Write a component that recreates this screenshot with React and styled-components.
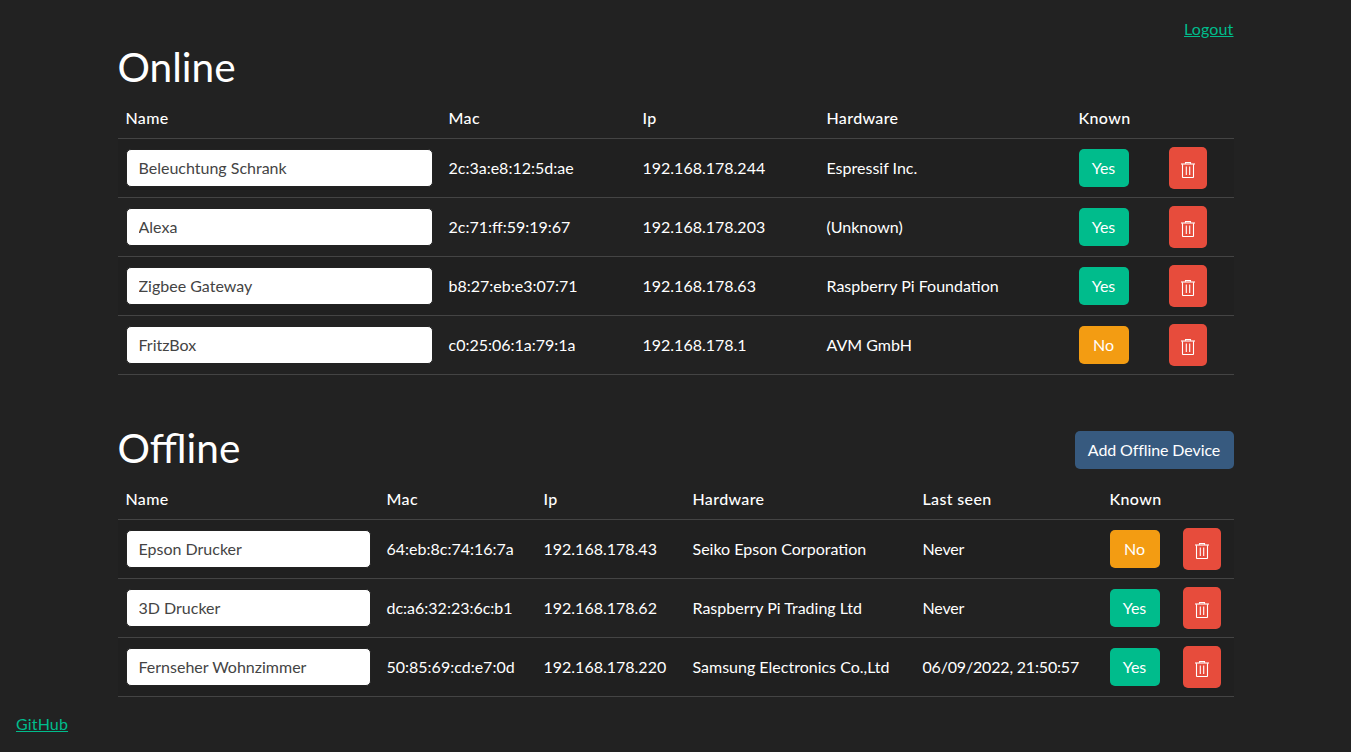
import React from 'react';
import styled, { createGlobalStyle } from 'styled-components';

const GlobalStyle = createGlobalStyle`
  * {
    box-sizing: border-box;
  }

  body {
    margin: 0;
    background: #222;
    color: #fff;
    font-family: Lato, "Liberation Sans", sans-serif;
    font-size: 16px;
    line-height: 24px;
  }
`;

const Page = styled.div`
  display: flex;
  flex-direction: column;
  min-height: 100vh;
  padding: 17px 16px 16px;
`;

const Main = styled.main`
  width: 1116px;
  margin: 0 auto;
`;

const TopBar = styled.div`
  display: flex;
  justify-content: flex-end;
`;

const Link = styled.a`
  color: #00bc8c;
  text-decoration: underline;
  letter-spacing: 0.15px;
`;

const SectionHead = styled.div`
  display: flex;
  align-items: center;
  justify-content: space-between;
  margin-top: ${(p) => p.$top}px;
  margin-bottom: ${(p) => p.$bottom}px;
`;

const Title = styled.h1`
  margin: 0;
  font-size: 40.6px;
  font-weight: 400;
  line-height: 48px;
`;

const Table = styled.table`
  width: 100%;
  table-layout: fixed;
  border-collapse: collapse;
`;

const Col = styled.col`
  width: ${(p) => p.$w}px;
`;

const Th = styled.th`
  height: 40px;
  padding: 8px;
  border-bottom: 1px solid #444;
  font-weight: 500;
  text-align: left;
  white-space: nowrap;
  letter-spacing: 0.35px;
`;

const Row = styled.tr`
  background: ${(p) => (p.$striped ? 'rgba(0, 0, 0, 0.05)' : 'transparent')};
`;

const Td = styled.td`
  height: 59px;
  padding: 8px;
  border-bottom: 1px solid #444;
  vertical-align: middle;
  white-space: nowrap;
`;

const SeenCell = styled(Td)`
  letter-spacing: -0.18px;
`;

const NameInput = styled.input`
  display: block;
  width: 100%;
  height: 38px;
  padding: 5px 12px 7px;
  border: 1px solid #222;
  border-radius: 5px;
  background: #fff;
  color: #444;
  font: inherit;
`;

const Button = styled.button`
  display: inline-flex;
  align-items: center;
  justify-content: center;
  height: 38px;
  padding: 6px 12px;
  border: 0;
  border-radius: 5px;
  color: #fff;
  font: inherit;
  cursor: pointer;
`;

const KnownButton = styled(Button)`
  width: 50px;
  background: ${(p) => (p.$known ? '#00bc8c' : '#f39c12')};
`;

const DeleteButton = styled(Button)`
  width: 38px;
  height: 42px;
  padding: 3px 0 0;
  background: #e74c3c;
`;

const AddButton = styled(Button)`
  width: 159px;
  margin-top: 4px;
  padding: 6px 0;
  background: #375a7f;
  letter-spacing: -0.1px;
`;

const TrashIcon = () => (
  <svg width="14" height="16" viewBox="0 0 14 16" fill="none" stroke="currentColor" strokeWidth="1.1">
    <path d="M0 2h14" />
    <path d="M4.5 1.8V0.5h5v1.3" />
    <path d="M1.5 2.2v12.6a0.7 0.7 0 0 0 0.7 0.7h9.6a0.7 0.7 0 0 0 0.7-0.7V2.2" />
    <path d="M5.3 4.6v8.4M8.7 4.6v8.4" />
  </svg>
);

const Footer = styled.footer`
  margin-top: auto;
`;

const online = [
  { name: 'Beleuchtung Schrank', mac: '2c:3a:e8:12:5d:ae', ip: '192.168.178.244', hw: 'Espressif Inc.', known: true },
  { name: 'Alexa', mac: '2c:71:ff:59:19:67', ip: '192.168.178.203', hw: '(Unknown)', known: true },
  { name: 'Zigbee Gateway', mac: 'b8:27:eb:e3:07:71', ip: '192.168.178.63', hw: 'Raspberry Pi Foundation', known: true },
  { name: 'FritzBox', mac: 'c0:25:06:1a:79:1a', ip: '192.168.178.1', hw: 'AVM GmbH', known: false },
];

const offline = [
  { name: 'Epson Drucker', mac: '64:eb:8c:74:16:7a', ip: '192.168.178.43', hw: 'Seiko Epson Corporation', seen: 'Never', known: false },
  { name: '3D Drucker', mac: 'dc:a6:32:23:6c:b1', ip: '192.168.178.62', hw: 'Raspberry Pi Trading Ltd', seen: 'Never', known: true },
  { name: 'Fernseher Wohnzimmer', mac: '50:85:69:cd:e7:0d', ip: '192.168.178.220', hw: 'Samsung Electronics Co.,Ltd', seen: '06/09/2022, 21:50:57', known: true },
];

const onlineCols = [323, 194, 184, 252, 90, 73];
const offlineCols = [261, 157, 149, 230, 187, 73, 59];

const DeviceTable = ({ devices, cols, showSeen }) => (
  <Table>
    <colgroup>
      {cols.map((w, i) => (
        <Col key={i} $w={w} />
      ))}
    </colgroup>
    <thead>
      <tr>
        <Th>Name</Th>
        <Th>Mac</Th>
        <Th>Ip</Th>
        <Th>Hardware</Th>
        {showSeen && <Th>Last seen</Th>}
        <Th>Known</Th>
        <Th />
      </tr>
    </thead>
    <tbody>
      {devices.map((d, i) => (
        <Row key={d.mac} $striped={i % 2 === 0}>
          <Td>
            <NameInput type="text" defaultValue={d.name} />
          </Td>
          <Td>{d.mac}</Td>
          <Td>{d.ip}</Td>
          <Td>{d.hw}</Td>
          {showSeen && <SeenCell>{d.seen}</SeenCell>}
          <Td>
            <KnownButton $known={d.known}>{d.known ? 'Yes' : 'No'}</KnownButton>
          </Td>
          <Td>
            <DeleteButton aria-label="Delete">
              <TrashIcon />
            </DeleteButton>
          </Td>
        </Row>
      ))}
    </tbody>
  </Table>
);

const App = () => {
  return (
    <Page>
      <GlobalStyle />
      <Main>
        <TopBar>
          <Link href="#">Logout</Link>
        </TopBar>
        <SectionHead $top={2} $bottom={7}>
          <Title>Online</Title>
        </SectionHead>
        <DeviceTable devices={online} cols={onlineCols} />
        <SectionHead $top={49} $bottom={7}>
          <Title>Offline</Title>
          <AddButton>Add Offline Device</AddButton>
        </SectionHead>
        <DeviceTable devices={offline} cols={offlineCols} showSeen />
      </Main>
      <Footer>
        <Link href="#">GitHub</Link>
      </Footer>
    </Page>
  );
};

export default App;
